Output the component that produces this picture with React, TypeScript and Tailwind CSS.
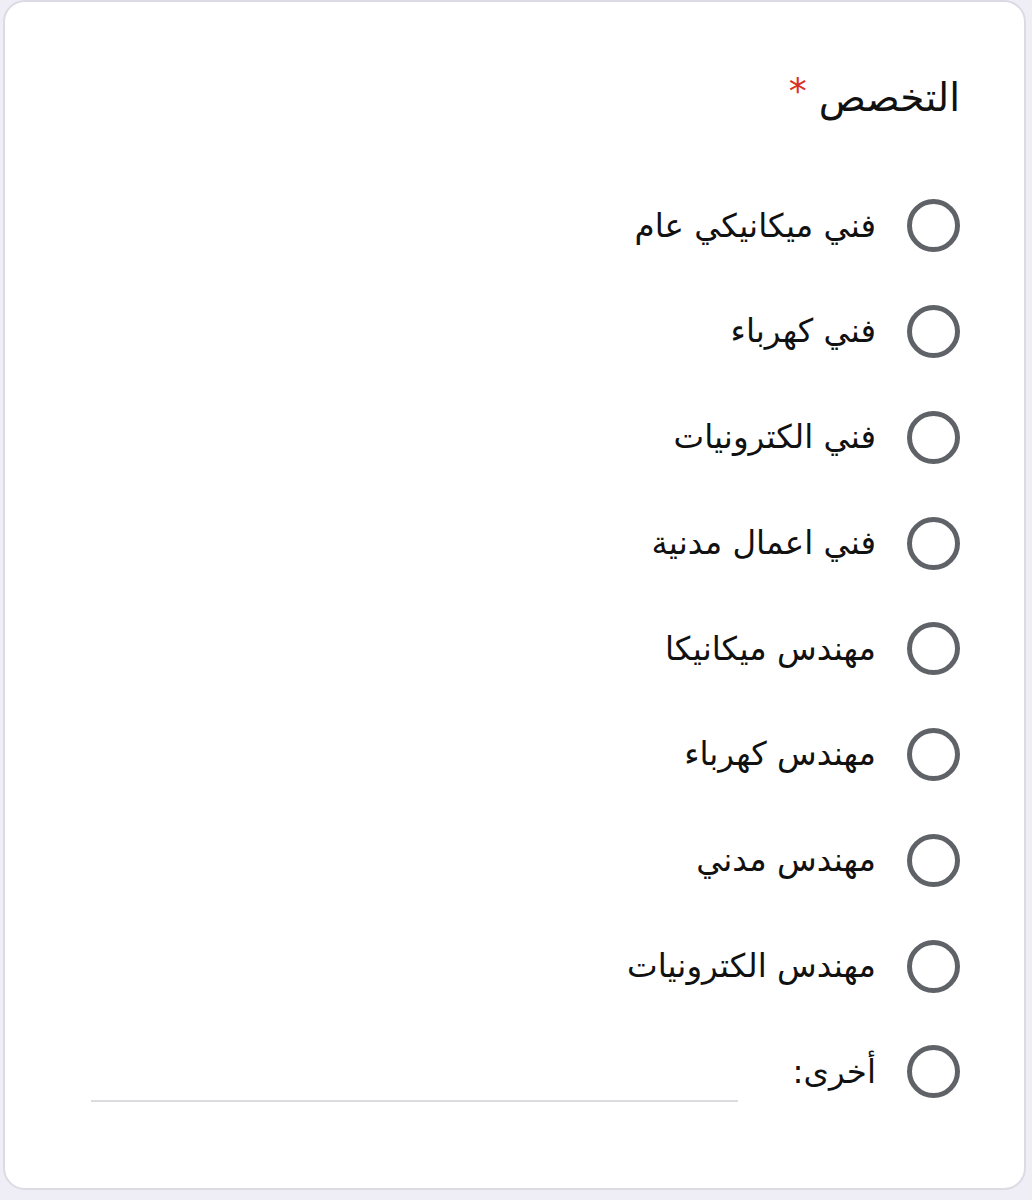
const options = [
  "فني ميكانيكي عام",
  "فني كهرباء",
  "فني الكترونيات",
  "فني اعمال مدنية",
  "مهندس ميكانيكا",
  "مهندس كهرباء",
  "مهندس مدني",
  "مهندس الكترونيات",
];

function Radio() {
  return (
    <span className="block w-[53px] h-[53px] shrink-0 rounded-full border-[5px] border-[#5f6368]" />
  );
}

export default function App() {
  return (
    <div className="min-h-[1200px] bg-[#efedf6] px-[3px] pr-[6px]" style={{ fontFamily: '"DejaVu Sans", sans-serif' }}>
      <div dir="rtl" className="h-[1190px] bg-white rounded-[22px] border-2 border-[#dcdae3] pr-[64px] pl-[86px]">
        {/* question title */}
        <div className="h-[171px] pt-[70px] flex items-start gap-[12px] text-[#111]">
          <span className="text-[39px] leading-[52px]">التخصص</span>
          <span className="text-[#d93025] text-[36px] leading-[38px]">*</span>
        </div>

        {options.map((label) => (
          <label key={label} className="h-[105.75px] flex items-center gap-[31px] text-[#111]">
            <Radio />
            <span className="text-[32.5px] leading-none">{label}</span>
          </label>
        ))}

        {/* other + free text */}
        <div className="h-[105.75px] flex items-center text-[#111]">
          <Radio />
          <span className="text-[32.5px] leading-none mr-[31px]">أخرى:</span>
          <div className="mr-auto w-[647px] h-[60px] border-b-2 border-[#dadce0]" />
        </div>
      </div>
    </div>
  );
}
